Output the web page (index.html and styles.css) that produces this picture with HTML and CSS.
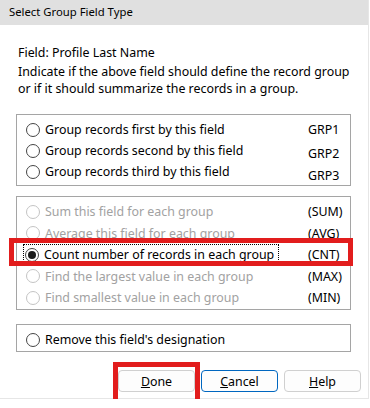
FILE: index.html
```html
<!DOCTYPE html>
<html lang="en">
<head>
    <meta charset="UTF-8">
    <title>Select Group Field Type</title>
    <link rel="stylesheet" href="styles.css">
</head>
<body>
    <div class="dialog">
        <div class="titlebar">Select Group Field Type</div>

        <div class="content">
            <p class="field-name">Field: Profile Last Name</p>
            <p class="hint">Indicate if the above field should define the record group<br>or if it should summarize the records in a group.</p>

            <!-- grouping options -->
            <div class="group-box group-box--group">
                <div class="option"><span class="radio"></span><span class="label">Group records first by this field</span><span class="code">GRP1</span></div>
                <div class="option"><span class="radio"></span><span class="label">Group records second by this field</span><span class="code code--low">GRP2</span></div>
                <div class="option"><span class="radio"></span><span class="label">Group records third by this field</span><span class="code code--lower">GRP3</span></div>
            </div>

            <!-- summary options -->
            <div class="group-box group-box--summary">
                <div class="option disabled"><span class="radio"></span><span class="label">Sum this field for each group</span><span class="code">(SUM)</span></div>
                <div class="option disabled"><span class="radio"></span><span class="label">Average this field for each group</span><span class="code">(AVG)</span></div>
                <div class="option selected"><span class="focus"><span class="radio checked"></span><span class="label">Count number of records in each group</span></span><span class="code">(CNT)</span></div>
                <div class="option disabled"><span class="radio"></span><span class="label">Find the largest value in each group</span><span class="code">(MAX)</span></div>
                <div class="option disabled"><span class="radio"></span><span class="label">Find smallest value in each group</span><span class="code">(MIN)</span></div>
                <div class="highlight highlight--row"></div>
            </div>

            <div class="group-box group-box--remove">
                <div class="option"><span class="radio"></span><span class="label">Remove this field's designation</span></div>
            </div>

            <div class="buttons">
                <button class="btn btn--done"><u>D</u>one<span class="highlight highlight--done"></span></button>
                <button class="btn btn--default"><u>C</u>ancel</button>
                <button class="btn"><u>H</u>elp</button>
            </div>
        </div>
    </div>
</body>
</html>
```

FILE: styles.css
```css
body {
    margin: 0;
    background: #fff;
    font-family: "Noto Sans", "Open Sans", sans-serif;
    font-size: 12.4px;
    color: #000;
}
.dialog {
    width: 369px;
    height: 399px;
    box-sizing: border-box;
    border-right: 1px solid #e6e6e6;
    border-bottom: 1px solid #e6e6e6;
}
.titlebar {
    height: 25px;
    line-height: 24px;
    padding-left: 9px;
    font-size: 11.3px;
    background-color: #e0e0e0;
}
.content {
    padding: 0 17px 0 16px;
}
.field-name {
    margin: 19px 0 0 2px;
    line-height: 18px;
}
.hint {
    margin: 1px 0 0 2px;
    line-height: 17px;
}
.group-box {
    position: relative;
    border: 1px solid #a5a5a5;
    box-sizing: border-box;
}
.group-box--group {
    margin-top: 17px;
    height: 72px;
    padding-top: 4px;
}
.group-box--summary {
    margin-top: 10px;
    height: 114px;
    padding-top: 4px;
}
.group-box--remove {
    margin-top: 14px;
    height: 28px;
    padding-top: 4px;
}
.option {
    display: flex;
    align-items: center;
    height: 21px;
    padding-left: 9px;
}
.group-box--summary .option {
    height: 21.5px;
}
.radio {
    width: 14px;
    height: 14px;
    box-sizing: border-box;
    border: 1px solid #454545;
    border-radius: 50%;
    margin-right: 5px;
    flex-shrink: 0;
    position: relative;
}
.radio.checked::after {
    content: "";
    position: absolute;
    left: 2px;
    top: 2px;
    width: 8px;
    height: 8px;
    border-radius: 50%;
    background: #1a1a1a;
}
.code {
    margin-left: auto;
    width: 42px;
    color: #000;
}
.code--low {
    position: relative;
    top: 3px;
}
.code--lower {
    position: relative;
    top: 4px;
}
.disabled {
    color: #a2a2a2;
}
.disabled .radio {
    border-color: #c4c4c4;
}
.focus {
    display: flex;
    align-items: center;
    height: 20px;
    margin-left: -2px;
    padding-left: 1px;
    padding-right: 4px;
    outline: 1px dotted #000;
}
.focus .radio {
    margin-right: 5px;
}
.highlight {
    position: absolute;
    border: 5px solid #e21d1d;
    box-sizing: border-box;
}
.highlight--row {
    left: -8px;
    top: 41px;
    width: 344px;
    height: 28px;
}
.buttons {
    display: flex;
    justify-content: flex-end;
    gap: 6px;
    margin-top: 18px;
    margin-right: -10px;
}
.btn {
    position: relative;
    width: 77px;
    height: 22px;
    padding: 0;
    font-family: "Noto Sans", "Open Sans", sans-serif;
    font-size: 12.4px;
    color: #000;
    background-color: #fdfdfd;
    border: 1px solid #d0d0d0;
    border-radius: 4px;
}
.btn--default {
    border-color: #0067c0;
}
.highlight--done {
    left: -6px;
    top: -9px;
    width: 87px;
    height: 46px;
}
```
